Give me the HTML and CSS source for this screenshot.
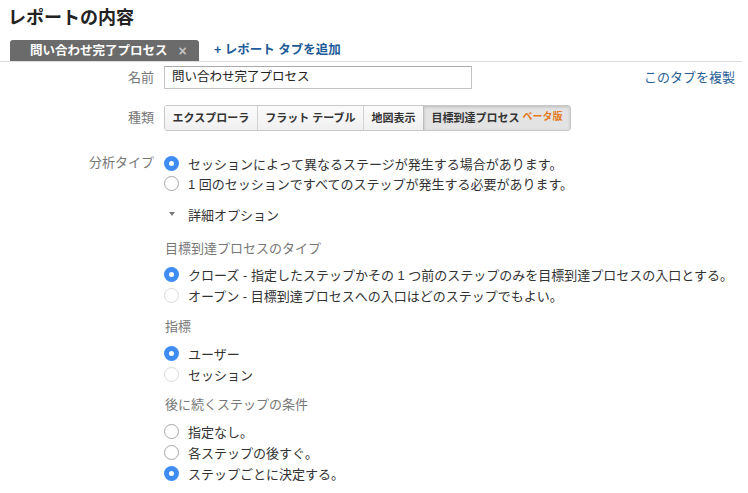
FILE: index.html
```html
<!DOCTYPE html>
<html lang="ja">
<head>
<meta charset="utf-8">
<link rel="stylesheet" href="styles.css">
</head>
<body>
<div class="page">
  <h1 class="title">レポートの内容</h1>
  <div class="tabbar">
    <div class="tab"><span class="tab-name">問い合わせ完了プロセス</span><span class="tab-close">×</span></div>
    <a class="add-tab">+ レポート タブを追加</a>
  </div>

  <div class="form">
    <div class="row row-name">
      <div class="label">名前</div>
      <div class="field field-name">
        <div class="input">問い合わせ完了プロセス</div>
        <a class="dup">このタブを複製</a>
      </div>
    </div>

    <div class="row row-type">
      <div class="label">種類</div>
      <div class="field">
        <div class="btn-group">
          <span class="btn">エクスプローラ</span>
          <span class="btn">フラット テーブル</span>
          <span class="btn">地図表示</span>
          <span class="btn btn-on">目標到達プロセス<span class="beta">ベータ版</span></span>
        </div>
      </div>
    </div>

    <div class="row row-analysis">
      <div class="label">分析タイプ</div>
      <div class="field">
        <div class="opts opts-tight">
          <div class="opt"><span class="radio on"></span>セッションによって異なるステージが発生する場合があります。</div>
          <div class="opt"><span class="radio dark"></span>1 回のセッションですべてのステップが発生する必要があります。</div>
        </div>
        <div class="details"><span class="caret-box"><span class="caret"></span></span>詳細オプション</div>

        <div class="sub-heading h-funnel">目標到達プロセスのタイプ</div>
        <div class="opts g-funnel">
          <div class="opt"><span class="radio on"></span>クローズ - 指定したステップかその 1 つ前のステップのみを目標到達プロセスの入口とする。</div>
          <div class="opt"><span class="radio light"></span>オープン - 目標到達プロセスへの入口はどのステップでもよい。</div>
        </div>

        <div class="sub-heading h-metric">指標</div>
        <div class="opts g-metric">
          <div class="opt"><span class="radio on"></span>ユーザー</div>
          <div class="opt"><span class="radio light"></span>セッション</div>
        </div>

        <div class="sub-heading h-cond">後に続くステップの条件</div>
        <div class="opts g-cond">
          <div class="opt"><span class="radio dark"></span>指定なし。</div>
          <div class="opt"><span class="radio dark"></span>各ステップの後すぐ。</div>
          <div class="opt"><span class="radio on"></span>ステップごとに決定する。</div>
        </div>
      </div>
    </div>
  </div>
</div>
</body>
</html>
```

FILE: styles.css
```css
html, body {
  margin: 0;
  padding: 0;
  background: #fff;
}
body {
  font-family: "Liberation Sans", "Noto Sans CJK JP", sans-serif;
  color: #333;
  font-size: 13px;
}
.page {
  width: 748px;
  height: 493px;
  overflow: hidden;
}
.title {
  margin: 0;
  padding: 6px 0 0 8px;
  font-size: 18px;
  line-height: 24px;
  font-weight: bold;
  color: #222;
}
.tabbar {
  margin-top: 10px;
  width: 742px;
  display: flex;
  align-items: center;
  padding-left: 10px;
  box-sizing: border-box;
  border-bottom: 1px solid #dcdcdc;
  height: 22px;
}
.tab {
  align-self: flex-end;
  height: 21px;
  width: 189px;
  box-sizing: border-box;
  background: #6b6b6b;
  border-radius: 3px 3px 0 0;
  color: #fff;
  font-weight: bold;
  font-size: 12.5px;
  line-height: 20px;
  padding-left: 20px;
  display: flex;
  align-items: center;
}
.tab-close {
  margin-left: 11px;
  color: #c4c4c4;
  font-size: 14px;
  font-weight: bold;
}
.add-tab {
  margin-left: 15px;
  color: #1d5b98;
  font-weight: bold;
  font-size: 12.5px;
  line-height: 20px;
  margin-top: -2px;
}
.form {
  width: 748px;
}
.row {
  display: grid;
  grid-template-columns: 164px 1fr;
}
.label {
  text-align: right;
  padding-right: 10px;
  color: #777;
  font-size: 13px;
  line-height: 20px;
}
.row-name {
  margin-top: 4px;
  align-items: center;
}
.field-name {
  display: flex;
  align-items: center;
}
.input {
  width: 308px;
  height: 23px;
  box-sizing: border-box;
  border: 1px solid #c4c4c4;
  border-top-color: #a9a9a9;
  padding-left: 7px;
  font-size: 12.5px;
  line-height: 21px;
  color: #222;
}
.dup {
  margin-left: auto;
  margin-right: 13px;
  color: #2a5f96;
  font-size: 13px;
  line-height: 20px;
}
.row-type {
  margin-top: 16px;
  align-items: center;
}
.btn-group {
  display: inline-flex;
  border: 1px solid #c9c9c9;
  border-radius: 3px;
  height: 26px;
  box-sizing: border-box;
  overflow: hidden;
}
.btn {
  padding: 0 7.5px;
  font-size: 11px;
  font-weight: bold;
  line-height: 24px;
  color: #333;
  background: linear-gradient(#fbfbfb, #f0f0f0);
  border-left: 1px solid #d3d3d3;
  white-space: nowrap;
}
.btn:first-child {
  border-left: none;
}
.btn-on {
  background: #e3e3e3;
  box-shadow: inset 0 1px 3px rgba(0, 0, 0, 0.18);
  border-left-color: #bdbdbd;
}
.beta {
  color: #e47a1e;
  font-size: 10px;
  margin-left: 3px;
  position: relative;
  top: -2px;
}
.row-analysis {
  margin-top: 22px;
  align-items: start;
}
.opt {
  display: flex;
  align-items: center;
  height: 21px;
  font-size: 13px;
  color: #333;
  white-space: nowrap;
}
.opts-tight .opt {
  height: 20px;
}
.radio {
  width: 15px;
  height: 15px;
  box-sizing: border-box;
  border-radius: 50%;
  margin-right: 9px;
  flex: none;
  background: #fff;
  border: 1px solid #c8c8c8;
  position: relative;
}
.radio.dark {
  border-color: #a8a8a8;
}
.radio.light {
  border-color: #dadada;
}
.radio.on {
  border: none;
  background: #3f8cf3;
}
.radio.on::after {
  content: "";
  position: absolute;
  left: 5px;
  top: 5px;
  width: 5px;
  height: 5px;
  border-radius: 50%;
  background: #fff;
}
.details {
  margin-top: 11px;
  display: flex;
  align-items: center;
  height: 20px;
  font-size: 13px;
  color: #333;
}
.caret-box {
  width: 15px;
  margin-right: 9px;
  display: flex;
  justify-content: center;
}
.caret {
  width: 0;
  height: 0;
  border-left: 3.5px solid transparent;
  border-right: 3.5px solid transparent;
  border-top: 4px solid #7a7a7a;
}
.sub-heading {
  font-size: 13px;
  line-height: 20px;
  height: 20px;
  color: #777;
  padding-left: 1px;
}
.h-funnel { margin-top: 15px; }
.g-funnel { margin-top: 5px; }
.h-metric { margin-top: 11px; }
.g-metric { margin-top: 6px; }
.h-cond { margin-top: 10px; }
.g-cond { margin-top: 6px; }
```
